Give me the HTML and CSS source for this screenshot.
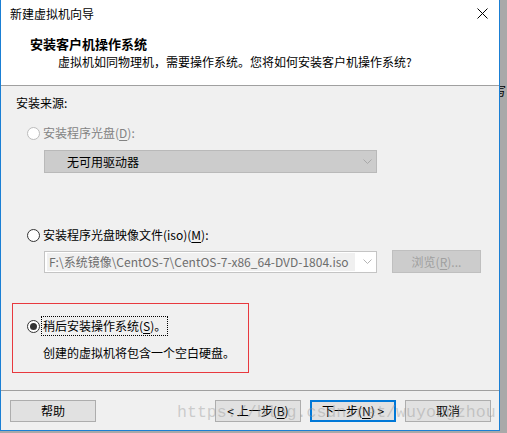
FILE: index.html
```html
<!DOCTYPE html>
<html lang="zh-CN">
<head>
<meta charset="utf-8">
<title>新建虚拟机向导</title>
<link rel="stylesheet" href="styles.css">
</head>
<body>
<div class="screen">
  <div class="dialog">
    <div class="header">
      <div class="titlebar">
        <span class="title">新建虚拟机向导</span>
        <svg class="close" width="11" height="11" viewBox="0 0 11 11"><path d="M0.5 0.5 L10.5 10.5 M10.5 0.5 L0.5 10.5" stroke="#000" stroke-width="1" fill="none"/></svg>
      </div>
      <div class="heading">安装客户机操作系统</div>
      <div class="subtitle">虚拟机如同物理机，需要操作系统。您将如何安装客户机操作系统?</div>
    </div>
    <div class="body">
      <div class="section-label">安装来源:</div>
      <div class="radio-row disabled">
        <span class="radio"></span>
        <span class="label">安装程序光盘(<u>D</u>):</span>
      </div>
      <div class="select disabled-select">
        <span class="select-text">无可用驱动器</span>
        <svg class="chev" width="9" height="5" viewBox="0 0 9 5"><polyline points="0.5,0.5 4.5,4.5 8.5,0.5" fill="none" stroke="#a8a8a8" stroke-width="1"/></svg>
      </div>
      <div class="radio-row row2">
        <span class="radio"></span>
        <span class="label">安装程序光盘映像文件(iso)(<u>M</u>):</span>
      </div>
      <div class="file-row">
        <div class="select path-select">
          <span class="path-text">F:\系统镜像\CentOS-7\CentOS-7-x86_64-DVD-1804.iso</span>
          <svg class="chev" width="9" height="5" viewBox="0 0 9 5"><polyline points="0.5,0.5 4.5,4.5 8.5,0.5" fill="none" stroke="#b4b4b4" stroke-width="1"/></svg>
        </div>
        <div class="browse">浏览(<u>R</u>)...</div>
      </div>
      <div class="later-box">
        <div class="radio-row checked-row">
          <span class="radio checked"></span>
          <span class="label focus">稍后安装操作系统(<u>S</u>)。</span>
        </div>
        <div class="desc">创建的虚拟机将包含一个空白硬盘。</div>
      </div>
    </div>
    <div class="footer">
      <div class="btn">帮助</div>
      <div class="spacer"></div>
      <div class="btn">&lt; 上一步(<u>B</u>)</div>
      <div class="btn primary">下一步(<u>N</u>) &gt;</div>
      <div class="btn">取消</div>
      <div class="watermark">https://blog.csdn.net/wuyongzhou</div>
    </div>
  </div>
  <div class="side"><span class="side-glyph">写</span></div>
</div>
</body>
</html>
```

FILE: styles.css
```css
html, body {
  margin: 0;
  padding: 0;
}
body {
  background: #a9a9a9;
  font-family: "Noto Sans CJK SC", "Noto Sans", sans-serif;
  font-size: 12px;
  color: #000;
}
.screen {
  display: flex;
  width: 507px;
  height: 433px;
  overflow: hidden;
}
.dialog {
  width: 500px;
  height: 431px;
  box-sizing: border-box;
  border: 1px solid #1a7fd4;
  border-top: none;
  background: #f0f0f0;
  display: flex;
  flex-direction: column;
  flex: none;
}
.side {
  flex: 1;
  background: #a9a9a9;
  position: relative;
  overflow: hidden;
}
.side-glyph {
  position: absolute;
  left: -6px;
  top: 84px;
  font-size: 12px;
  line-height: 14px;
  color: #000;
}
.header {
  background: #fff;
  height: 85px;
  border-bottom: 1px solid #a0a0a0;
  flex: none;
}
.titlebar {
  height: 28px;
  display: flex;
  align-items: center;
  justify-content: space-between;
  padding-left: 9px;
  padding-right: 11px;
}
.title {
  line-height: 18px;
}
.close {
  display: block;
  margin-top: -1px;
}
.heading {
  margin-top: 7px;
  padding-left: 29px;
  font-size: 13px;
  font-weight: bold;
  line-height: 18px;
}
.subtitle {
  padding-left: 57px;
  line-height: 18px;
}
.body {
  flex: 1;
  padding-top: 8px;
}
.section-label {
  padding-left: 15px;
  line-height: 18px;
}
.radio-row {
  display: flex;
  align-items: center;
  height: 18px;
  padding-left: 26px;
  margin-top: 12px;
}
.radio-row.row2 {
  margin-top: 53px;
}
.radio {
  width: 13px;
  height: 13px;
  box-sizing: border-box;
  border: 1px solid #333;
  border-radius: 50%;
  background: #fff;
  margin-right: 3px;
  flex: none;
  display: flex;
  align-items: center;
  justify-content: center;
}
.disabled .radio {
  border-color: #bcbcbc;
  background: #fff;
}
.disabled .label {
  color: #838383;
}
.radio.checked::after {
  content: "";
  width: 7px;
  height: 7px;
  border-radius: 50%;
  background: #333;
}
.label {
  line-height: 18px;
}
.label u, .btn u, .browse u {
  text-decoration-thickness: 1px;
  text-underline-offset: 2px;
}
.select {
  margin-left: 43px;
  width: 333px;
  box-sizing: border-box;
  display: flex;
  align-items: center;
  position: relative;
}
.disabled-select {
  margin-top: 8px;
  height: 23px;
  background: #cccccc;
  border: 1px solid #b9b9b9;
}
.select-text {
  padding-left: 22px;
  line-height: 18px;
  flex: 1;
}
.chev {
  display: block;
  margin-right: 4px;
  margin-left: 8px;
}
.file-row {
  display: flex;
  align-items: center;
  margin-top: 6px;
}
.path-select {
  height: 22px;
  background: #fff;
  border: 1px solid #c4c4c4;
  padding-left: 2px;
}
.path-text {
  flex: 1;
  background: #f0f0f0;
  color: #6d6d6d;
  line-height: 18px;
  padding-left: 2px;
  white-space: nowrap;
  overflow: hidden;
}
.browse {
  margin-left: 15px;
  width: 89px;
  height: 23px;
  box-sizing: border-box;
  background: #cccccc;
  border: 1px solid #bfbfbf;
  color: #a0a0a0;
  display: flex;
  align-items: center;
  justify-content: center;
}
.later-box {
  margin-top: 30px;
  margin-left: 11px;
  width: 237px;
  height: 70px;
  box-sizing: border-box;
  border: 1px solid #e8393e;
  padding-top: 13px;
}
.checked-row {
  margin-top: 0;
  padding-left: 14px;
}
.focus {
  outline: 1px dotted #000;
  outline-offset: 0;
  padding: 0 1px;
  margin-left: -1px;
}
.desc {
  margin-top: 9px;
  padding-left: 30px;
  line-height: 18px;
}
.footer {
  height: 40px;
  box-sizing: border-box;
  border-top: 1px solid #a0a0a0;
  padding: 9px 8px 0 9px;
  display: flex;
  align-items: flex-start;
  gap: 9px;
  position: relative;
  flex: none;
}
.spacer {
  flex: 1;
}
.btn {
  width: 86px;
  height: 22px;
  box-sizing: border-box;
  background: #e1e1e1;
  border: 1px solid #adadad;
  display: flex;
  align-items: center;
  justify-content: center;
  line-height: 18px;
}
.btn.primary {
  border: 2px solid #0078d7;
}
.watermark {
  position: absolute;
  left: 176px;
  top: 12px;
  font-family: "Liberation Mono", monospace;
  font-size: 16.6px;
  line-height: 20px;
  color: rgba(150, 150, 150, 0.42);
  white-space: nowrap;
  pointer-events: none;
}
```
